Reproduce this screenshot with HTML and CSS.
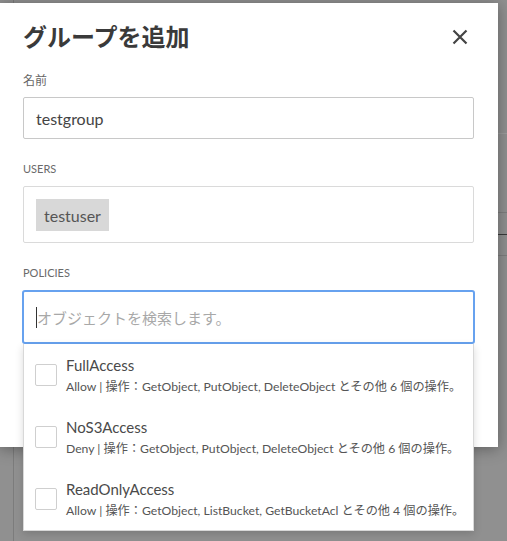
FILE: index.html
```html
<!DOCTYPE html>
<html lang="ja">
<head>
<meta charset="utf-8">
<link rel="stylesheet" href="styles.css">
</head>
<body>
<div class="page">
  <div class="row row-a"></div>
  <div class="row row-b"></div>
  <div class="row row-c"></div>
  <div class="row row-d"></div>
</div>
<div class="modal">
  <div class="modal-header">
    <h1 class="modal-title">グループを追加</h1>
    <button class="close" aria-label="close">
      <svg width="16" height="16" viewBox="0 0 16 16"><path d="M1.5 1.5 L14.5 14.5 M14.5 1.5 L1.5 14.5" stroke="#444" stroke-width="2.2" fill="none"/></svg>
    </button>
  </div>
  <div class="field">
    <div class="label">名前</div>
    <div class="input">testgroup</div>
  </div>
  <div class="field">
    <div class="label caps">USERS</div>
    <div class="tags"><span class="chip">testuser</span></div>
  </div>
  <div class="field last">
    <div class="label caps">POLICIES</div>
    <div class="search-wrap">
      <div class="search"><span class="caret"></span><span class="placeholder">オブジェクトを検索します。</span></div>
      <div class="menu">
        <div class="item">
          <span class="check"></span>
          <div class="item-text">
            <div class="item-title">FullAccess</div>
            <div class="item-desc">Allow | 操作：GetObject, PutObject, DeleteObject とその他 6 個の操作。</div>
          </div>
        </div>
        <div class="item">
          <span class="check"></span>
          <div class="item-text">
            <div class="item-title">NoS3Access</div>
            <div class="item-desc">Deny | 操作：GetObject, PutObject, DeleteObject とその他 6 個の操作。</div>
          </div>
        </div>
        <div class="item">
          <span class="check"></span>
          <div class="item-text">
            <div class="item-title">ReadOnlyAccess</div>
            <div class="item-desc">Allow | 操作：GetObject, ListBucket, GetBucketAcl とその他 4 個の操作。</div>
          </div>
        </div>
      </div>
    </div>
  </div>
</div>
</body>
</html>
```
FILE: styles.css
```css
html, body {
  margin: 0;
  padding: 0;
}
body {
  width: 507px;
  height: 541px;
  overflow: hidden;
  background: #909090;
  font-family: Lato, "Noto Sans CJK JP", sans-serif;
  position: relative;
}
.page {
  margin-left: 13px;
  height: 541px;
  border-left: 1px solid #7c7c7c;
  box-sizing: border-box;
}
.row { box-sizing: border-box; }
.row-a { height: 134px; border-bottom: 1px solid #9c9c9c; }
.row-b { height: 79px; border-bottom: 1px solid #7e7e7e; }
.row-c { height: 22px; border-bottom: 1px solid #3a3a3a; }
.row-d { height: 21px; border-bottom: 1px solid #7e7e7e; }

.modal {
  position: absolute;
  left: 0;
  top: 3px;
  width: 498px;
  height: 444px;
  background: #fff;
  box-shadow: 0 2px 14px rgba(0, 0, 0, 0.35);
  box-sizing: border-box;
  padding: 18px 24px 0 23px;
}
.modal-header {
  display: flex;
  align-items: center;
  justify-content: space-between;
  margin-bottom: 22px;
}
.modal-title {
  margin: 0;
  font-size: 24px;
  line-height: 29px;
  font-weight: 700;
  color: #3a3a3a;
  font-family: "Noto Sans CJK JP", sans-serif;
}
.close {
  border: 0;
  background: none;
  padding: 0;
  width: 16px;
  height: 16px;
  margin-right: 6px;
  margin-top: 3px;
  display: flex;
}
.field { margin-bottom: 22px; }
.label {
  font-size: 12px;
  line-height: 16px;
  color: #666;
  margin-bottom: 9px;
  font-family: "Noto Sans CJK JP", sans-serif;
}
.label.caps {
  font-size: 11px;
  font-family: Lato, sans-serif;
  color: #6a6a6a;
}
.input {
  height: 42px;
  box-sizing: border-box;
  border: 1px solid #c8c8c8;
  border-radius: 2px;
  padding: 0 12px;
  display: flex;
  align-items: center;
  font-size: 16px;
  color: #444;
}
.tags {
  height: 57px;
  box-sizing: border-box;
  border: 1px solid #dadada;
  border-radius: 2px;
  padding: 12px 12px;
  display: flex;
  align-items: flex-start;
}
.chip {
  height: 32px;
  display: inline-flex;
  align-items: center;
  padding: 0 8px;
  background: #d8d8d8;
  color: #555;
  font-size: 16px;
}
.search-wrap { position: relative; margin: 0 -1px; }
.search {
  height: 54px;
  box-sizing: border-box;
  border: 2px solid #67a2ef;
  border-radius: 3px;
  padding: 0 12px;
  display: flex;
  align-items: center;
}
.caret {
  width: 1px;
  height: 21px;
  background: #333;
}
.placeholder {
  font-size: 15px;
  color: #a8a8a8;
  font-family: "Noto Sans CJK JP", sans-serif;
}
.menu {
  position: absolute;
  left: 1px;
  right: 1px;
  top: 54px;
  background: #fff;
  border: 1px solid #d8d8d8;
  border-top: 0;
  box-shadow: 0 3px 8px rgba(0, 0, 0, 0.15);
  z-index: 2;
}
.item {
  height: 62px;
  box-sizing: border-box;
  display: flex;
  align-items: center;
  padding: 0 11px;
}
.check {
  width: 22px;
  height: 22px;
  box-sizing: border-box;
  border: 1px solid #cfcfcf;
  border-radius: 2px;
  flex: none;
  margin-right: 9px;
}
.item-text { display: flex; flex-direction: column; margin-top: 1px; }
.item-title {
  font-size: 15px;
  line-height: 20px;
  color: #4a4a4a;
}
.item-desc {
  font-size: 12.2px;
  line-height: 18px;
  margin-top: 3px;
  color: #555;
  white-space: nowrap;
}
```
